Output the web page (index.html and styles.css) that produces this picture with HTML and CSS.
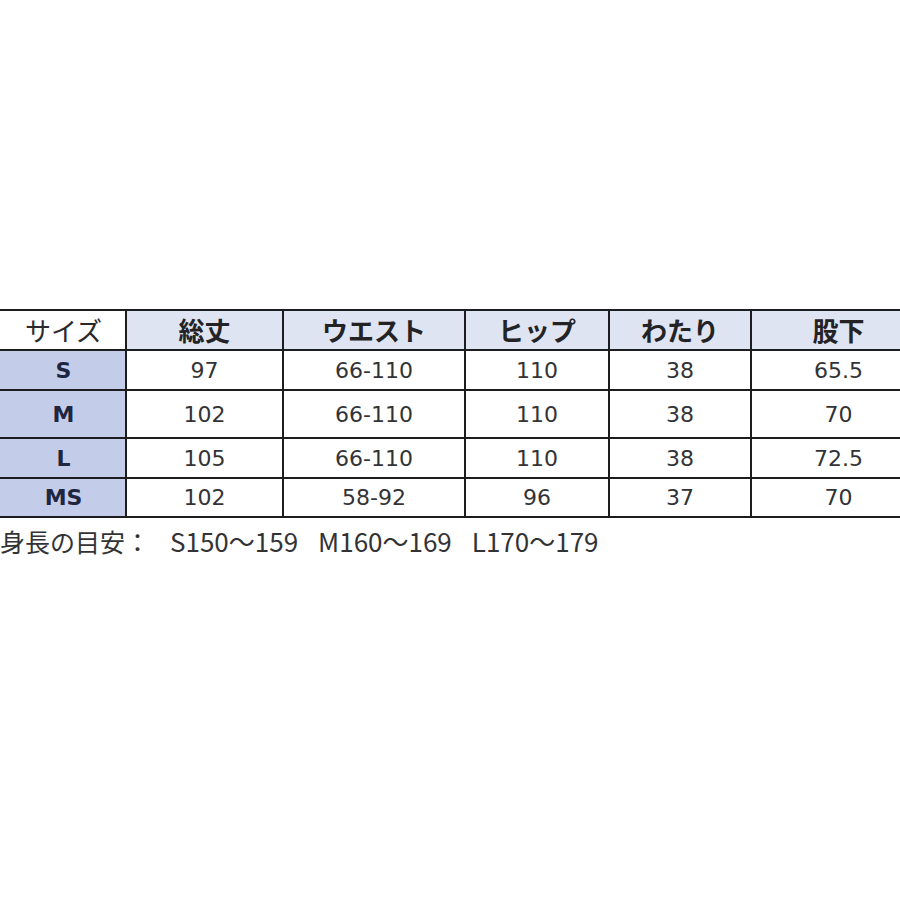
FILE: index.html
```html
<!DOCTYPE html>
<html lang="ja">
<head>
<meta charset="utf-8">
<link rel="stylesheet" href="styles.css">
</head>
<body>
<div class="sheet">
  <div class="grid">
    <div class="cell corner">サイズ</div>
    <div class="cell head">総丈</div>
    <div class="cell head">ウエスト</div>
    <div class="cell head">ヒップ</div>
    <div class="cell head">わたり</div>
    <div class="cell head">股下</div>

    <div class="cell size">S</div>
    <div class="cell val">97</div>
    <div class="cell val">66-110</div>
    <div class="cell val">110</div>
    <div class="cell val">38</div>
    <div class="cell val">65.5</div>

    <div class="cell size">M</div>
    <div class="cell val">102</div>
    <div class="cell val">66-110</div>
    <div class="cell val">110</div>
    <div class="cell val">38</div>
    <div class="cell val">70</div>

    <div class="cell size">L</div>
    <div class="cell val">105</div>
    <div class="cell val">66-110</div>
    <div class="cell val">110</div>
    <div class="cell val">38</div>
    <div class="cell val">72.5</div>

    <div class="cell size">MS</div>
    <div class="cell val">102</div>
    <div class="cell val">58-92</div>
    <div class="cell val">96</div>
    <div class="cell val">37</div>
    <div class="cell val">70</div>
  </div>
  <p class="note"><span class="lead">身長の目安：</span><span class="grp">S150〜159</span><span class="grp">M160〜169</span><span class="grp">L170〜179</span></p>
</div>
</body>
</html>
```

FILE: styles.css
```css
html, body {
  margin: 0;
  padding: 0;
  background: #ffffff;
  overflow: hidden;
}

.sheet {
  margin-left: -10px;
  padding-top: 309px;
  width: 940px;
}

.grid {
  display: grid;
  grid-template-columns: 133px 155px 180px 142px 140px 173px;
  grid-template-rows: 38px 38px 46px 38px 37px;
  gap: 2px;
  padding: 2px;
  background: #1d1d1f;
  width: max-content;
}

.cell {
  display: flex;
  align-items: center;
  justify-content: center;
  background: #ffffff;
}

.corner {
  font-family: "Noto Sans CJK JP", sans-serif;
  font-size: 26px;
  font-weight: 400;
  color: #2a2a2e;
  padding-left: 10px;
  padding-bottom: 2px;
}

.head {
  background: #dfe4f2;
  font-family: "Noto Sans CJK JP", sans-serif;
  font-size: 26px;
  font-weight: 700;
  color: #232326;
  padding-bottom: 2px;
}

.size {
  background: #c3cdea;
  font-family: "DejaVu Sans", sans-serif;
  font-size: 22px;
  font-weight: 700;
  color: #1f2640;
  padding-left: 10px;
}

.val {
  font-family: "DejaVu Sans", sans-serif;
  font-size: 22px;
  color: #333336;
}

.note {
  margin: 0;
  padding: 8px 0 0 10px;
  font-family: "Noto Sans CJK JP", sans-serif;
  font-size: 25px;
  line-height: 30px;
  color: #333336;
  white-space: nowrap;
  display: flex;
  gap: 20px;
}

.note .grp {
  font-size: 26px;
}
```
